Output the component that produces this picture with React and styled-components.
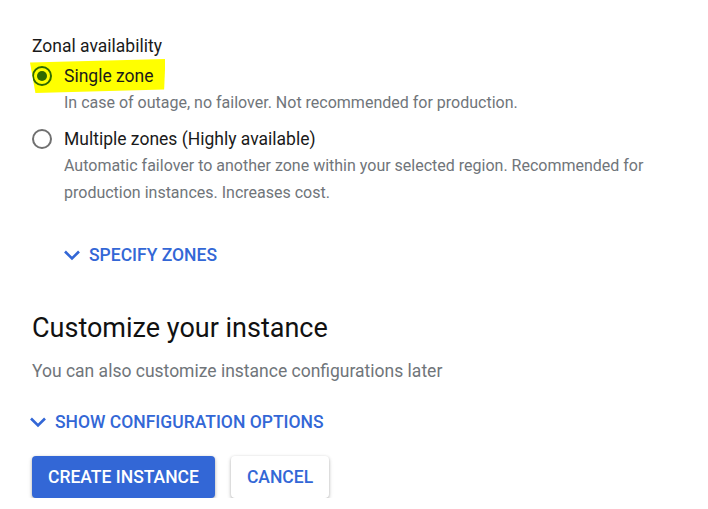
import React from 'react'
import styled, { createGlobalStyle } from 'styled-components'

const GlobalStyle = createGlobalStyle`
  body {
    margin: 0;
    background: #fff;
    font-family: Roboto, "Liberation Sans", sans-serif;
    color: #202124;
  }
`

const BLUE = '#3367d6'

const Page = styled.div`
  padding: 35px 32px 0;
  display: flex;
  flex-direction: column;
`

const FieldLabel = styled.div`
  font-size: 17.5px;
  line-height: 22px;
  color: #1a1a1a;
`

const RadioRow = styled.label`
  display: flex;
  align-items: center;
  gap: 12px;
  height: 26px;
  font-size: 17.5px;
  color: #1a1a1a;
  align-self: flex-start;
  margin: ${p => (p.highlight ? '-4px 0 -4px -2px' : '0')};
  padding: ${p => (p.highlight ? '4px 12px 4px 2px' : '0')};
  background: ${p => (p.highlight ? '#ffff00' : 'transparent')};
  clip-path: ${p => (p.highlight ? 'polygon(0 10%, 100% 0, 99% 90%, 4% 100%)' : 'none')};
`

const RadioCircle = styled.span`
  width: 20px;
  height: 20px;
  box-sizing: border-box;
  border-radius: 50%;
  border: 2px solid ${p => (p.checked ? '#2e6a00' : '#707070')};
  display: flex;
  align-items: center;
  justify-content: center;
  flex-shrink: 0;

  &::after {
    content: '';
    width: 10px;
    height: 10px;
    border-radius: 50%;
    background: #2e6a00;
    display: ${p => (p.checked ? 'block' : 'none')};
  }
`

const Hint = styled.div`
  padding-left: 32px;
  font-size: 16px;
  line-height: 27px;
  color: #70757a;
  max-width: 600px;
`

const Expander = styled.div`
  display: flex;
  align-items: center;
  gap: 8px;
  color: ${BLUE};
  font-size: 17.5px;
  font-weight: 500;
  text-transform: uppercase;
  margin-left: ${p => p.indent || 0}px;
  height: 20px;
`

const Heading = styled.h2`
  margin: 0;
  font-size: 27px;
  font-weight: 400;
  line-height: 32px;
  color: #111;
`

const Subtext = styled.div`
  font-size: 17.5px;
  color: #70757a;
  line-height: 22px;
`

const Actions = styled.div`
  display: flex;
  gap: 16px;
`

const Button = styled.button`
  height: 42px;
  padding: 0 16px;
  border: none;
  border-radius: 4px;
  font-family: inherit;
  font-size: 17.5px;
  font-weight: 500;
  text-transform: uppercase;
  background: ${p => (p.primary ? BLUE : '#fff')};
  color: ${p => (p.primary ? '#fff' : BLUE)};
  box-shadow: 0 1px 3px rgba(0, 0, 0, 0.25), 0 2px 5px rgba(0, 0, 0, 0.12);
`

const Chevron = () => (
  <svg width="18" height="18" viewBox="0 0 18 18">
    <path d="M2 5.5l7 7 7-7" fill="none" stroke={BLUE} strokeWidth="2.6" />
  </svg>
)

const Spacer = styled.div`
  height: ${p => p.h}px;
  flex-shrink: 0;
`

export default function App() {
  return (
    <Page>
      <GlobalStyle />
      <FieldLabel>Zonal availability</FieldLabel>
      <Spacer h={6} />
      <RadioRow highlight>
        <RadioCircle checked />
        Single zone
      </RadioRow>
      <Hint>In case of outage, no failover. Not recommended for production.</Hint>
      <Spacer h={10} />
      <RadioRow>
        <RadioCircle />
        Multiple zones (Highly available)
      </RadioRow>
      <Hint>
        Automatic failover to another zone within your selected region. Recommended for
        production instances. Increases cost.
      </Hint>
      <Spacer h={39} />
      <Expander indent={31}>
        <Chevron />
        Specify zones
      </Expander>
      <Spacer h={47} />
      <Heading>Customize your instance</Heading>
      <Spacer h={16} />
      <Subtext>You can also customize instance configurations later</Subtext>
      <Spacer h={30} />
      <Expander indent={-3}>
        <Chevron />
        Show configuration options
      </Expander>
      <Spacer h={24} />
      <Actions>
        <Button primary>Create instance</Button>
        <Button>Cancel</Button>
      </Actions>
    </Page>
  )
}
